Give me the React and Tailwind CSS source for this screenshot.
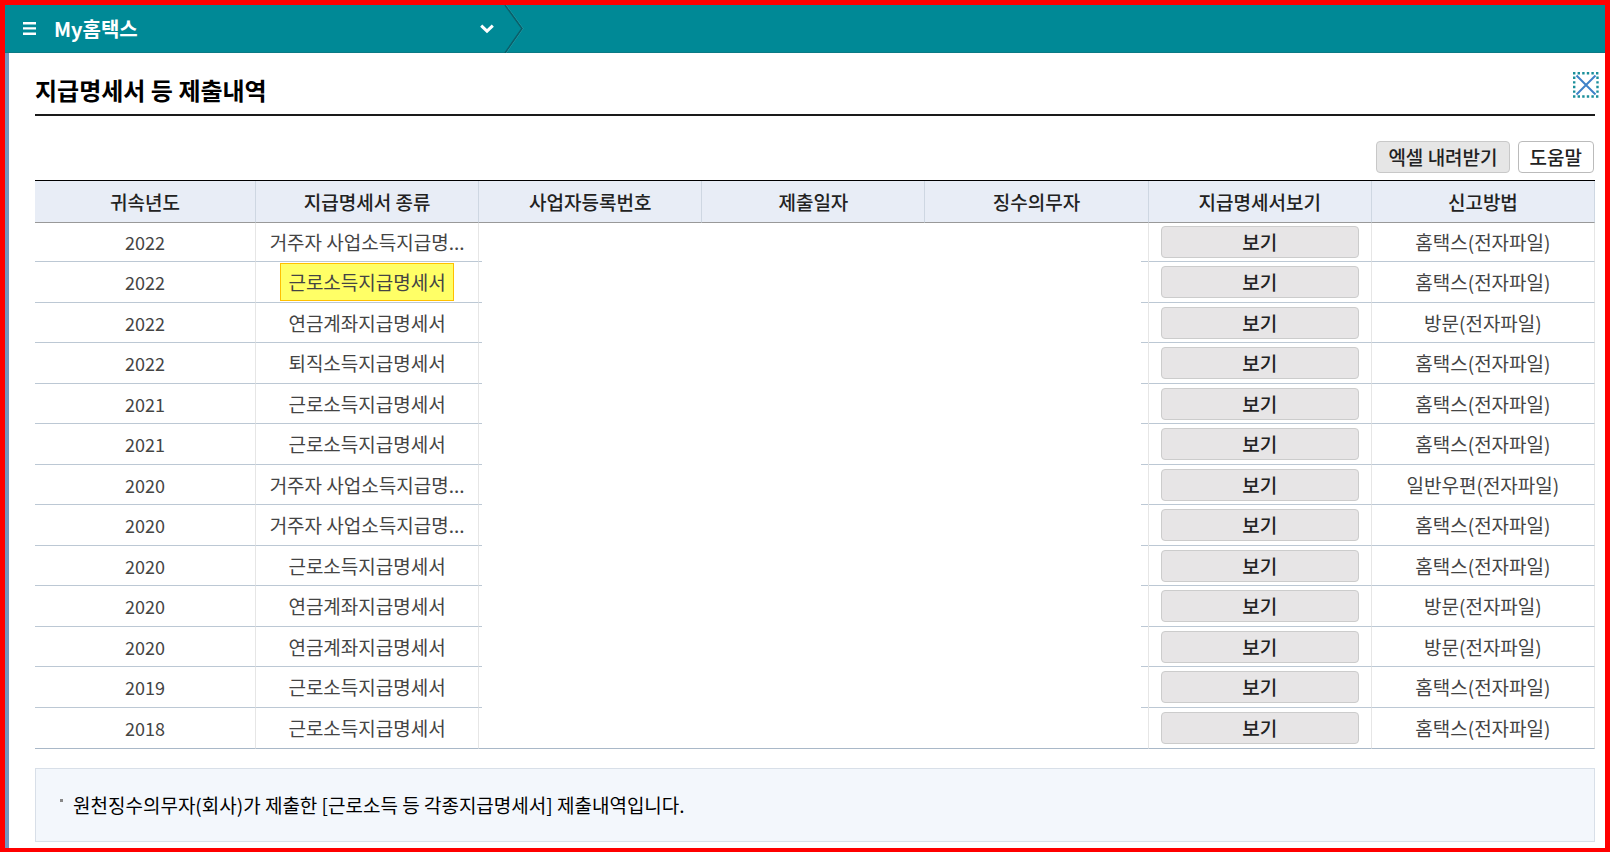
import React from "react";

const SUBMISSIONS = [
  { year: 2022, kind: "거주자 사업소득지급명...", method: "홈택스(전자파일)" },
  { year: 2022, kind: "근로소득지급명세서", method: "홈택스(전자파일)", marked: true },
  { year: 2022, kind: "연금계좌지급명세서", method: "방문(전자파일)" },
  { year: 2022, kind: "퇴직소득지급명세서", method: "홈택스(전자파일)" },
  { year: 2021, kind: "근로소득지급명세서", method: "홈택스(전자파일)" },
  { year: 2021, kind: "근로소득지급명세서", method: "홈택스(전자파일)" },
  { year: 2020, kind: "거주자 사업소득지급명...", method: "일반우편(전자파일)" },
  { year: 2020, kind: "거주자 사업소득지급명...", method: "홈택스(전자파일)" },
  { year: 2020, kind: "근로소득지급명세서", method: "홈택스(전자파일)" },
  { year: 2020, kind: "연금계좌지급명세서", method: "방문(전자파일)" },
  { year: 2020, kind: "연금계좌지급명세서", method: "방문(전자파일)" },
  { year: 2019, kind: "근로소득지급명세서", method: "홈택스(전자파일)" },
  { year: 2018, kind: "근로소득지급명세서", method: "홈택스(전자파일)" },
];

const HEADINGS = [
  "귀속년도",
  "지급명세서 종류",
  "사업자등록번호",
  "제출일자",
  "징수의무자",
  "지급명세서보기",
  "신고방법",
];

function TopBar() {
  return (
    <header className="flex h-12 items-center border-b border-[#0a7a85] bg-[#008996] text-white">
      <button type="button" aria-label="메뉴" className="ml-[18px]">
        <svg width="13" height="13" viewBox="0 0 13 13" fill="currentColor">
          <path d="M0 0h13v2.4H0zM0 5.2h13v2.4H0zM0 10.4h13v2.6H0z" />
        </svg>
      </button>
      <button type="button" className="ml-[18px] flex w-[440px] items-center justify-between text-xl font-bold">
        <span>My홈택스</span>
        <svg width="14" height="10" viewBox="0 0 14 10" fill="none" stroke="currentColor" strokeWidth="3">
          <path d="M1.2 1.6 7 7.2l5.8-5.6" />
        </svg>
      </button>
      <svg className="ml-2.5" width="20" height="48" viewBox="0 0 20 48" fill="none">
        <path d="M2 0 19 23.5 2 48" stroke="#2ba0aa" strokeWidth="1" />
        <path d="M1 0 18 23.5 1 48" stroke="#0b5f69" strokeWidth="1.5" />
      </svg>
    </header>
  );
}

function SubmissionTable() {
  return (
    <table className="mt-[7px] w-full table-fixed border-separate border-spacing-0 border-t border-black text-center text-[19px] leading-6">
      <colgroup>
        <col className="w-[221px]" />
        <col span={6} />
      </colgroup>
      <thead>
        <tr className="h-[42px]">
          {HEADINGS.map((h) => (
            <th
              key={h}
              scope="col"
              className="border-r border-b border-r-[#ced7e2] border-b-[#999999] bg-[#e8edf6] p-0 font-medium text-[#222222]"
            >
              {h}
            </th>
          ))}
        </tr>
      </thead>
      <tbody className="text-[#444444]">
        {SUBMISSIONS.map((row, i) => (
          <tr key={i} className="group h-10 first:h-[39px] last:h-[41px] even:h-[41px]">
            <td className="border-r border-b border-r-[#e6e6e6] border-b-[#bcc8d4] p-0 text-lg leading-6 group-last:border-b-[#a9b8c8]">
              {row.year}
            </td>
            <td className="border-r border-b border-r-[#e6e6e6] border-b-[#bcc8d4] p-0 group-last:border-b-[#a9b8c8]">
              {row.marked ? (
                <mark className="mx-auto block w-[174px] border border-[#ffc000] bg-[#ffff66] py-1.5 text-[#444444]">
                  {row.kind}
                </mark>
              ) : (
                row.kind
              )}
            </td>
            <td className="bg-[linear-gradient(#bcc8d4,#bcc8d4)] bg-[length:3px_1px] bg-[position:left_bottom] bg-no-repeat p-0 group-last:border-b group-last:border-[#a9b8c8] group-last:bg-none" />
            <td className="p-0 group-last:border-b group-last:border-[#a9b8c8]" />
            <td className="border-r border-[#e6e6e6] bg-[linear-gradient(#bcc8d4,#bcc8d4)] bg-[length:7px_1px] bg-[position:right_bottom] bg-no-repeat p-0 group-last:border-b group-last:border-b-[#a9b8c8] group-last:bg-none" />
            <td className="border-r border-b border-r-[#e6e6e6] border-b-[#bcc8d4] px-3 py-0 group-last:border-b-[#a9b8c8]">
              <button
                type="button"
                className="block h-8 w-full rounded border border-[#cccccc] bg-[#e7e5e6] font-medium text-[#222222]"
              >
                보기
              </button>
            </td>
            <td className="border-r border-b border-r-[#e6e6e6] border-b-[#bcc8d4] p-0 group-last:border-b-[#a9b8c8]">
              {row.method}
            </td>
          </tr>
        ))}
      </tbody>
    </table>
  );
}

export default function App() {
  return (
    <div className="min-h-screen border-[5px] border-[#ff0000] bg-white font-[Noto_Sans_CJK_KR,sans-serif]">
      <TopBar />
      <main className="border-l-4 border-[#7396c0] pr-2.5 pb-1.5 pl-[26px]">
        <div className="flex h-[63px] items-center justify-between border-b-2 border-[#1a1a1a]">
          <h1 className="pt-3 text-2xl font-bold text-black">지급명세서 등 제출내역</h1>
          <button type="button" aria-label="닫기" className="-mr-1 pt-0.5">
            <svg width="26" height="26" viewBox="0 0 26 26" fill="none">
              <path
                d="M0 1.2h26M0 24.5h26M1.2 4.6v18M24.5 4.6v18"
                stroke="#1a8f9b"
                strokeWidth="2.4"
                strokeDasharray="2.4 2.2"
              />
              <path d="M3.5 3.5l19 19M22.5 3.5l-19 19" stroke="#3f82c8" strokeWidth="2" />
            </svg>
          </button>
        </div>
        <div className="mt-[25px] flex justify-end gap-2 pr-px text-[19px] leading-6 text-[#222222]">
          <button type="button" className="h-8 rounded-sm border border-[#c8c8c8] bg-[#e6e6e6] px-[11px] font-medium">
            엑셀 내려받기
          </button>
          <button type="button" className="h-8 rounded-sm border border-[#bbbbbb] bg-white px-[11px] font-medium">
            도움말
          </button>
        </div>
        <SubmissionTable />
        <ul className="mt-[19px] border border-[#d8dfe8] bg-[#f3f7fc] px-6 py-6 text-[19px] leading-6 text-black">
          <li className="flex gap-2.5">
            <span className="mt-1.5 size-[3px] shrink-0 bg-[#888888]" />
            원천징수의무자(회사)가 제출한 [근로소득 등 각종지급명세서] 제출내역입니다.
          </li>
        </ul>
      </main>
    </div>
  );
}
